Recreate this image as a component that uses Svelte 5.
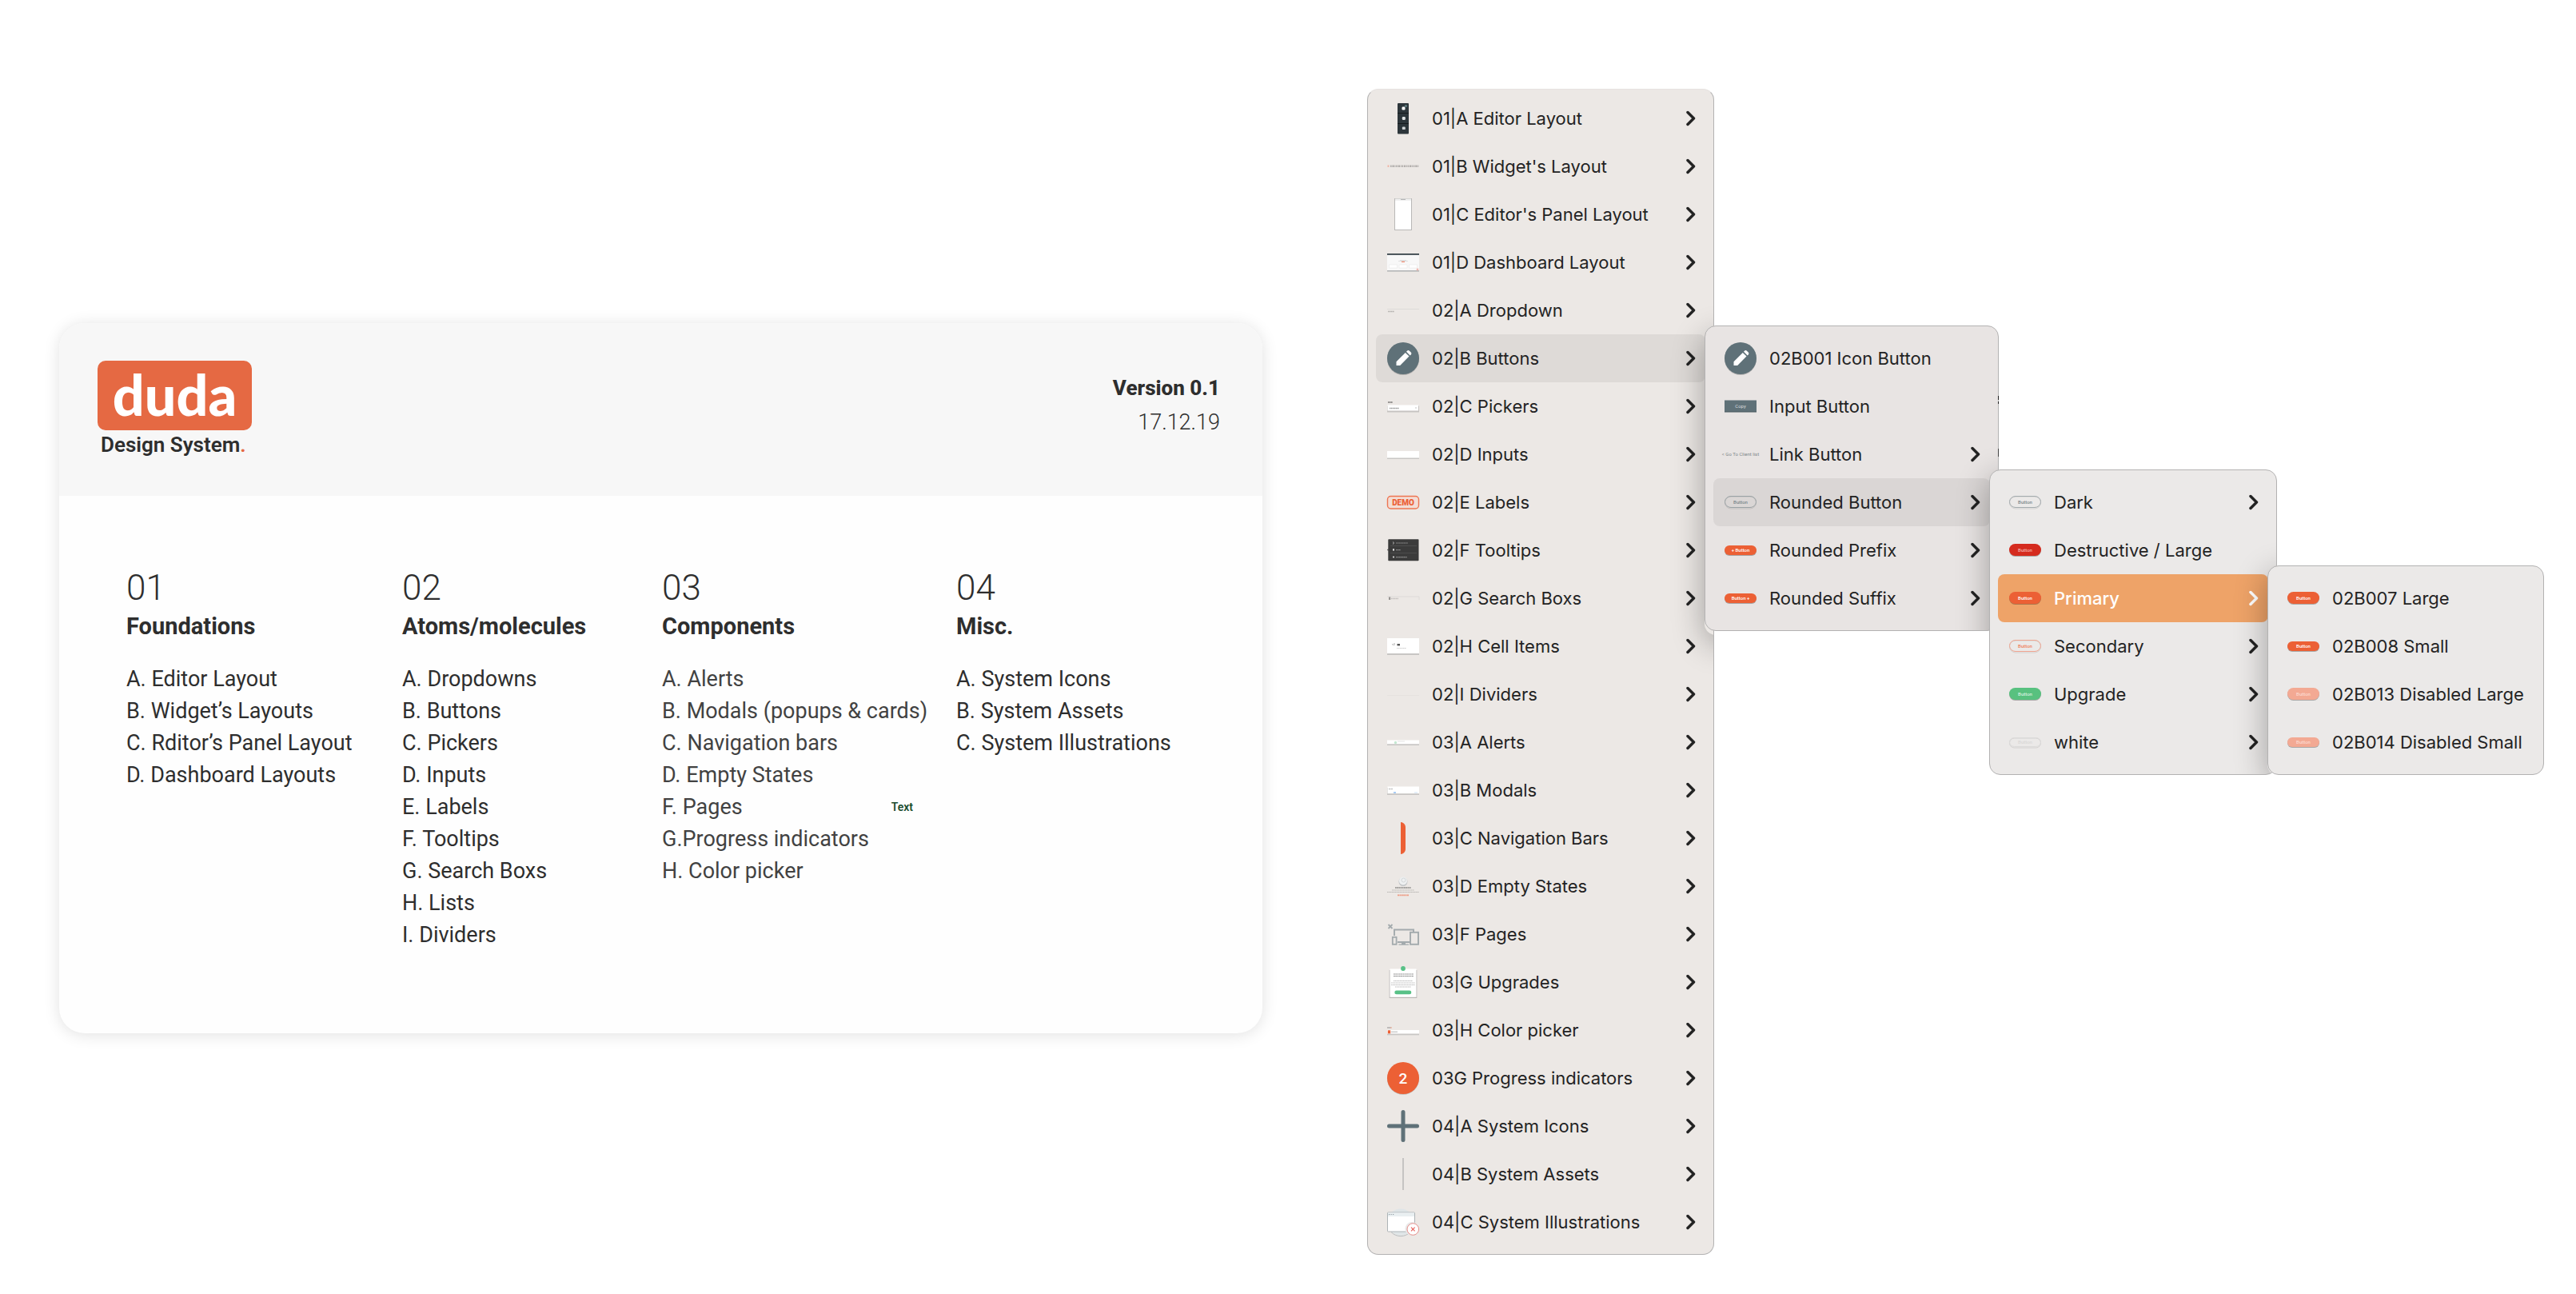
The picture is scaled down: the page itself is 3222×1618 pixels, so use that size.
<script>
  const sections = [
    {
      number: '01',
      title: 'Foundations',
      items: ['A. Editor Layout', 'B. Widget’s Layouts', 'C. Rditor’s Panel Layout', 'D. Dashboard Layouts']
    },
    {
      number: '02',
      title: 'Atoms/molecules',
      items: [
        'A. Dropdowns',
        'B. Buttons',
        'C. Pickers',
        'D. Inputs',
        'E. Labels',
        'F. Tooltips',
        'G. Search Boxs',
        'H. Lists',
        'I. Dividers'
      ]
    },
    {
      number: '03',
      title: 'Components',
      soft: true,
      items: [
        'A. Alerts',
        'B. Modals (popups & cards)',
        'C. Navigation bars',
        'D. Empty States',
        'F. Pages',
        'G.Progress indicators',
        'H. Color picker'
      ],
      tags: { 'F. Pages': 'Text' }
    },
    {
      number: '04',
      title: 'Misc.',
      items: ['A. System Icons', 'B. System Assets', 'C. System Illustrations']
    }
  ];

  const orange = '#ec6035';
  const pill = (fill, text = '#fff', extra = {}) => ({ fill, text, label: 'Button', ...extra });

  const menu = {
    name: 'root',
    open: 5,
    items: [
      { label: '01|A Editor Layout', icon: 'editor', more: true },
      { label: "01|B Widget's Layout", icon: 'widget', more: true },
      { label: "01|C Editor's Panel Layout", icon: 'panel', more: true },
      { label: '01|D Dashboard Layout', icon: 'dashboard', more: true },
      { label: '02|A Dropdown', icon: 'dropdown', more: true },
      {
        label: '02|B Buttons',
        icon: 'pencil',
        more: true,
        submenu: {
          name: 'buttons',
          open: 3,
          items: [
            { label: '02B001 Icon Button', icon: 'pencil' },
            { label: 'Input Button', icon: 'copy' },
            { label: 'Link Button', icon: 'link', more: true },
            {
              label: 'Rounded Button',
              pill: pill('none', '#7b878c', { stroke: '#9aa2a5' }),
              more: true,
              submenu: {
                name: 'rounded',
                open: 2,
                items: [
                  { label: 'Dark', pill: pill('none', '#7b878c', { stroke: '#a3abae' }), more: true },
                  { label: 'Destructive / Large', pill: pill('#d52b1e', '#f3b3ad') },
                  {
                    label: 'Primary',
                    accent: true,
                    pill: pill(orange),
                    more: true,
                    submenu: {
                      name: 'primary',
                      open: -1,
                      items: [
                        { label: '02B007 Large', pill: pill(orange) },
                        { label: '02B008 Small', pill: pill(orange, '#fff', { small: true }) },
                        { label: '02B013 Disabled Large', pill: pill('#f3a993', '#fbd9cf') },
                        { label: '02B014 Disabled Small', pill: pill('#f3a993', '#fbd9cf', { small: true }) }
                      ]
                    }
                  },
                  { label: 'Secondary', pill: pill('none', '#ef7d5a', { stroke: '#f0a590' }), more: true },
                  { label: 'Upgrade', pill: pill('#58c17f', '#d5f0df'), more: true },
                  { label: 'white', pill: pill('none', '#d9d8d7', { stroke: '#dcdbda', small: true }), more: true }
                ]
              }
            },
            { label: 'Rounded Prefix', pill: pill(orange, '#fff', { small: true, label: '+ Button' }), more: true },
            { label: 'Rounded Suffix', pill: pill(orange, '#fff', { small: true, label: 'Button +' }), more: true }
          ]
        }
      },
      { label: '02|C Pickers', icon: 'pickers', more: true },
      { label: '02|D Inputs', icon: 'inputs', more: true },
      { label: '02|E Labels', icon: 'labels', more: true },
      { label: '02|F Tooltips', icon: 'tooltips', more: true },
      { label: '02|G Search Boxs', icon: 'search', more: true },
      { label: '02|H Cell Items', icon: 'cells', more: true },
      { label: '02|I Dividers', icon: 'dividers', more: true },
      { label: '03|A Alerts', icon: 'alerts', more: true },
      { label: '03|B Modals', icon: 'modals', more: true },
      { label: '03|C Navigation Bars', icon: 'navigation', more: true },
      { label: '03|D Empty States', icon: 'empty', more: true },
      { label: '03|F Pages', icon: 'pages', more: true },
      { label: '03|G Upgrades', icon: 'upgrades', more: true },
      { label: '03|H Color picker', icon: 'color', more: true },
      { label: '03G Progress indicators', icon: 'progress', more: true },
      { label: '04|A System Icons', icon: 'plus', more: true },
      { label: '04|B System Assets', icon: 'assets', more: true },
      { label: '04|C System Illustrations', icon: 'illustrations', more: true }
    ]
  };
</script>

{#snippet pillIcon(p)}
  {@const top = p.small ? 14 : 12}
  {@const height = p.small ? 12 : 15}
  <svg class="icon" viewBox="0 0 40 40" aria-hidden="true">
    {#if p.stroke}
      <rect x="0.5" y={top + 1} width="39" height={height} rx={height / 2} fill="none" stroke="#000" stroke-opacity="0.1" />
      <rect x="0.5" y={top + 0.5} width="39" height={height - 1} rx={height / 2} fill="none" stroke={p.stroke} />
    {:else}
      <rect x="0" y={top + 1} width="40" height={height} rx={height / 2} fill="#000" fill-opacity="0.28" />
      <rect x="0" y={top} width="40" {height} rx={height / 2} fill={p.fill} />
    {/if}
    <text class="pill-text" x="20" y="22" fill={p.text}>{p.label}</text>
  </svg>
{/snippet}

{#snippet pictureIcon(name)}
  <svg class="icon" viewBox="0 0 40 40" aria-hidden="true">
    {#if name === 'editor'}
      <rect x="13" y="1" width="14" height="38.5" rx="1" fill="#2d363b" />
      <path d="M13 13.5h14M13 26.5h14" stroke="#161c1f" />
      <rect x="18.5" y="5.5" width="4" height="4" rx="1.2" fill="#fff" />
      <circle cx="23.5" cy="4.5" r="1.6" fill="#5e7d80" />
      <rect x="18.8" y="18" width="4" height="4" rx="1.2" fill="#dfe3e4" />
      <rect x="18.8" y="30.5" width="4" height="3.6" rx="1.2" fill="#cfd4d6" />
    {:else if name === 'widget'}
      <rect x="0.5" y="18.5" width="2" height="2.4" fill="#efb5a6" />
      <path d="M4 19.7h36" stroke="#b3afad" stroke-width="2.6" stroke-dasharray="1.6 0.8 2.4 0.7 1 0.7" />
    {:else if name === 'panel'}
      <rect x="9" y="0" width="22" height="40" fill="#b9b8b7" />
      <rect x="10" y="1" width="20" height="38" fill="#fff" />
      <rect x="10" y="0.5" width="20" height="2.5" fill="#f0f0f0" />
      <path d="M17 1.5h6" stroke="#b5b5b5" />
    {:else if name === 'dashboard'}
      <rect y="9" width="40" height="22" fill="#f8f8f8" />
      <rect y="9" width="40" height="1.8" fill="#38444a" />
      <rect y="30" width="40" height="1.6" fill="#b4b6b7" />
      <path d="M16 17.5h8M14 18.5h12" stroke="#d0d0d0" stroke-width="0.6" />
      <rect x="18" y="18.8" width="4" height="1.2" fill="#ef8a70" />
      <path d="M2.5 23h10v4h-10zM15 23h10v4h-10zM27.5 23h10v4h-10z" fill="#fff" stroke="#e4e4e4" stroke-width="0.5" />
      <circle cx="38" cy="29" r="1.4" fill="#f0b7b0" />
    {:else if name === 'dropdown'}
      <path d="M0 18.5h40" stroke="#dedbd9" />
      <path d="M1 21.5h8" stroke="#b5b2b0" stroke-width="1.6" stroke-dasharray="1.6 0.4" />
    {:else if name === 'pencil'}
      <circle cx="20" cy="21" r="20" fill="#000" fill-opacity="0.18" />
      <circle cx="20" cy="20" r="20" fill="#5f7178" />
      <path d="M11.5 24.2L22.8 12.9l4.7 4.7L16.2 28.9h-4.7z" fill="#fff" />
      <path d="M24 11.7l1-1c.9-.9 2-.9 2.9 0l1.8 1.8c.9.9.9 2 0 2.9l-1 1z" fill="#fff" />
    {:else if name === 'copy'}
      <rect y="13.5" width="40" height="14" fill="#49585f" />
      <rect y="12.5" width="40" height="14" fill="#5f7178" />
      <text class="pill-text plain" x="20" y="21.5" fill="#d5dbdd">Copy</text>
    {:else if name === 'link'}
      <text class="pill-text plain" x="20" y="21.8" fill="#7f878a">&lt; Go To Client list</text>
    {:else if name === 'pickers'}
      <path d="M1 15h6" stroke="#8f8c8a" stroke-width="2" stroke-dasharray="1.5 0.4" />
      <rect y="19.5" width="40" height="8" fill="#c6c3c1" />
      <rect x="0.5" y="18.5" width="38.5" height="7" fill="#fff" />
      <path d="M3 22.5h12" stroke="#999" stroke-width="1.6" stroke-dasharray="1.5 0.5" />
      <circle cx="36" cy="22" r="0.8" fill="#bbb" />
    {:else if name === 'inputs'}
      <rect y="18" width="40" height="8" fill="#c9c7c5" />
      <rect y="16" width="40" height="8.5" fill="#fff" />
    {:else if name === 'labels'}
      <rect x="0.5" y="12.5" width="39" height="15.5" rx="4" fill="#f3ddd5" stroke="#ee7552" stroke-width="1.4" />
      <text class="demo-text" x="20" y="23.8" fill="#ec6035">DEMO</text>
    {:else if name === 'tooltips'}
      <path d="M0 19.5l1.5-1.5v3z" fill="#3b3b3b" />
      <rect x="1.3" y="6.3" width="38.2" height="27" rx="0.8" fill="#3b3b3b" />
      <path d="M4 14.5h33M4 23.5h33" stroke="#505050" stroke-width="0.8" />
      <path d="M7 9.500l1.600 1.500L7 12.500" stroke="#ddd" fill="none" stroke-width="0.800" />
      <rect x="7" y="18.2" width="2" height="2.4" fill="#ddd" />
      <circle cx="8" cy="28.5" r="1.1" fill="#ddd" />
      <path d="M11 11h15M11 19.7h6M11 28.7h14" stroke="#8c8c8c" stroke-width="1.2" stroke-dasharray="1.5 0.4" />
    {:else if name === 'search'}
      <path d="M0 18h40v4" fill="none" stroke="#dddad8" />
      <rect x="2" y="18.5" width="2.2" height="3.5" fill="#979492" />
      <path d="M5 20.5h9" stroke="#c2bfbd" stroke-width="1.5" stroke-dasharray="1.5 0.5" />
    {:else if name === 'cells'}
      <rect y="12" width="40" height="19" fill="#c8c6c4" />
      <rect y="10" width="40" height="19" fill="#fff" />
      <path d="M6.5 17l1 2M9 16v3" stroke="#999" stroke-width="0.8" />
      <rect x="12.5" y="17" width="3.5" height="2.4" fill="#555" />
      <path d="M12 22.5h12" stroke="#cfcfcf" stroke-dasharray="1.5 0.5" />
    {:else if name === 'dividers'}
      <path d="M0 21.5h40" stroke="#e5e2df" />
    {:else if name === 'alerts'}
      <rect y="19" width="40" height="5" fill="#c8c6c4" />
      <rect y="17.5" width="40" height="4.8" fill="#fff" />
      <circle cx="10.5" cy="20.5" r="1.7" fill="#c4e8d1" />
      <path d="M13 19h9" stroke="#e4e4e4" />
    {:else if name === 'modals'}
      <rect y="17" width="40" height="9" fill="#c8c6c4" />
      <rect x="0.5" y="15.5" width="39.5" height="8.7" fill="#fff" />
      <path d="M2 18.5h5" stroke="#bbb" stroke-width="1.5" stroke-dasharray="1 0.4" />
      <rect x="8" y="22" width="3" height="2" fill="#a9cdf5" />
      <path d="M34 23h4" stroke="#cde0f5" />
    {:else if name === 'navigation'}
      <path d="M17 0c4 .5 6 3 6 7v26c0 4-2 6.5-6 7z" fill="#ec6035" />
    {:else if name === 'empty'}
      <circle cx="20" cy="14.5" r="5.5" fill="#c3c6c8" />
      <circle cx="20" cy="13.5" r="5" fill="#eef0f1" />
      <circle cx="20.5" cy="12.5" r="2.5" fill="none" stroke="#c9cdcf" stroke-width="0.7" />
      <path d="M10 22h20" stroke="#8b8987" stroke-width="1.6" stroke-dasharray="1.8 0.4" />
      <path d="M6 25h28M0 27.5h40" stroke="#bab7b5" stroke-width="1.2" stroke-dasharray="1.5 0.5" />
      <path d="M13 31.3h14" stroke="#ee9c85" stroke-width="1.8" stroke-dasharray="2 0.4" />
    {:else if name === 'pages'}
      <path d="M1.5 8l5 5M6.5 8l-5 5" stroke="#a3aaad" stroke-width="1.8" />
      <path d="M9 22v-7.5h24V17M13 30h15" stroke="#a3aaad" stroke-width="1.9" fill="none" />
      <rect x="6.8" y="23.8" width="4.8" height="9" fill="none" stroke="#a3aaad" stroke-width="1.8" />
      <rect x="29" y="17.8" width="10" height="15" fill="none" stroke="#a3aaad" stroke-width="1.9" />
      <path d="M18 31h5v2h-5zM14.5 32.5h12.5v1.2H14.5z" fill="#a3aaad" />
    {:else if name === 'upgrades'}
      <rect x="2.7" y="5" width="34.6" height="35" fill="#b9b7b5" />
      <rect x="3.5" y="3.5" width="33" height="35.3" fill="#fff" />
      <circle cx="20" cy="3" r="2.9" fill="#58c187" />
      <path d="M8 10h25M8 12.5h25" stroke="#888" stroke-width="1.1" stroke-dasharray="1.8 0.5" />
      <path d="M8 18.5h24M5 21h30M5 23.5h30M10 26h20" stroke="#b5b5b5" stroke-width="0.9" stroke-dasharray="1.5 0.5" />
      <rect x="9.3" y="30.5" width="21" height="4.8" rx="2.4" fill="#58c187" />
    {:else if name === 'color'}
      <path d="M0 17h4.5" stroke="#b0adab" stroke-width="1.5" />
      <path d="M4.5 17h1" stroke="#ec6035" />
      <rect y="21.5" width="40" height="4.8" fill="#c8c6c4" />
      <rect y="20" width="40" height="4.5" fill="#fff" />
      <rect x="0.8" y="20.3" width="3.4" height="4" fill="#ec6035" />
      <path d="M5 22.3h8" stroke="#ccc" stroke-width="1.5" />
    {:else if name === 'progress'}
      <circle cx="20" cy="20.8" r="20" fill="#000" fill-opacity="0.2" />
      <circle cx="20" cy="20" r="20" fill="#ec6035" />
      <text class="badge-text" x="20" y="27" fill="#fff">2</text>
    {:else if name === 'plus'}
      <path d="M20 2.5v35M2.5 20h35" stroke="#5f7178" stroke-width="5" stroke-linecap="round" />
    {:else if name === 'assets'}
      <path d="M20 0v40" stroke="#c6c4c3" stroke-width="2" />
    {:else if name === 'illustrations'}
      <circle cx="17" cy="20" r="16.5" fill="#dfe5e7" />
      <path d="M5 32.5a16.5 16.5 0 0 0 24 0" fill="none" stroke="#b6bcbf" />
      <rect x="0.5" y="8" width="34" height="24" rx="0.8" fill="#fff" stroke="#adb3b6" />
      <rect x="1" y="8.5" width="33" height="4.5" fill="#e9eff1" />
      <path d="M2 10.5h1.2M4.5 10.5h1.2M7 10.5h1.2" stroke="#8c979c" />
      <circle cx="31" cy="28.5" r="8.5" fill="#e8e8e8" />
      <circle cx="32.3" cy="29" r="7.3" fill="#fff" stroke="#e58f8b" />
      <path d="M30 26.7l4.6 4.6M34.6 26.7L30 31.3" stroke="#e8635d" stroke-width="1.2" />
    {/if}
  </svg>
{/snippet}

{#snippet menuPanel(panel)}
  <div class="menu {panel.name}">
    <ul class="rows" aria-label={panel.name}>
      {#each panel.items as item, i}
        <li class="row">
          <button
            type="button"
            class="item"
            class:open={i === panel.open}
            class:accent={item.accent}
            aria-haspopup={item.more ? 'menu' : undefined}
            aria-expanded={item.more ? i === panel.open : undefined}
          >
            {#if item.pill}
              {@render pillIcon(item.pill)}
            {:else}
              {@render pictureIcon(item.icon)}
            {/if}
            <span class="label">{item.label}</span>
            {#if item.more}
              <svg class="chevron" viewBox="0 0 12 20" aria-hidden="true">
                <path d="M2 2.5L9.5 10 2 17.5" />
              </svg>
            {/if}
          </button>
          {#if item.submenu}
            <div class="flyout">{@render menuPanel(item.submenu)}</div>
          {/if}
        </li>
      {/each}
    </ul>
    {#if panel.open >= 0}
      <div class="shade" aria-hidden="true" style:--row={panel.open} style:--count={panel.items[panel.open].submenu.items.length}>
        <div class="cast"></div>
      </div>
    {/if}
  </div>
{/snippet}

<main class="page">
  <article class="card">
    <header class="head">
      <div class="brand">
        <div class="logo">duda</div>
        <p class="tagline">Design System<span class="dot">.</span></p>
      </div>
      <div class="meta">
        <p class="version">Version 0.1</p>
        <p class="date">17.12.19</p>
      </div>
    </header>
    <div class="columns">
      {#each sections as section}
        <section class:soft={section.soft}>
          <p class="number">{section.number}</p>
          <h2>{section.title}</h2>
          <ul class="list">
            {#each section.items as item}
              <li>
                {item}
                {#if section.tags?.[item]}<span class="tag">{section.tags[item]}</span>{/if}
              </li>
            {/each}
          </ul>
        </section>
      {/each}
    </div>
  </article>

  <nav class="menus" aria-label="Symbols">
    {@render menuPanel(menu)}
  </nav>
</main>

<style>
  :global(body) {
    background: #fff;
  }

  .page {
    display: flex;
    box-sizing: border-box;
    min-height: 100vh;
    padding: 111px 40px 49px 74px;
    gap: 131px;
    color: #2e2e2e;
    font-family: Roboto, 'Liberation Sans', sans-serif;
  }

  p,
  h2,
  ul {
    margin: 0;
    padding: 0;
  }

  ul {
    list-style: none;
  }

  .card {
    flex: 1;
    align-self: center;
    margin-top: 15px;
    border-radius: 32px;
    background: #fefefe;
    box-shadow: 0 2px 20px rgba(0, 0, 0, 0.12);
    overflow: hidden;
  }

  .head {
    display: flex;
    justify-content: space-between;
    box-sizing: border-box;
    height: 216px;
    padding: 47px 53px 0 48px;
    background: #f7f7f7;
  }

  .brand {
    width: 193px;
  }

  .logo {
    height: 87px;
    border-radius: 10px;
    background: #e56943;
    color: #fff;
    font: 900 70px/84px Lato, sans-serif;
    text-align: center;
  }

  .tagline {
    padding-left: 4px;
    font-size: 26px;
    font-weight: 600;
    line-height: 37px;
    white-space: nowrap;
  }

  .dot {
    color: #e56943;
  }

  .meta {
    padding-top: 13px;
    text-align: right;
    font-size: 27px;
    line-height: 43px;
  }

  .version {
    font-size: 26px;
    font-weight: 800;
  }

  .date {
    font-weight: 300;
  }

  .columns {
    display: grid;
    grid-template-columns: 345fr 325fr 368fr 383fr;
    padding: 87px 0 103px 84px;
  }

  .number {
    font-size: 44px;
    font-weight: 300;
    line-height: 56px;
  }

  h2 {
    margin-bottom: 26px;
    font-size: 29px;
    font-weight: 700;
    line-height: 40px;
  }

  .list {
    font-size: 27px;
    line-height: 40px;
    white-space: nowrap;
  }

  .soft .list {
    color: #424242;
  }

  .soft li {
    display: flex;
    justify-content: space-between;
    width: 314px;
  }

  .tag {
    color: #1c4d2f;
    font-size: 14px;
    font-weight: 600;
  }

  .menus {
    flex: none;
    width: 1472px;
    font-family: Inter, 'Liberation Sans', sans-serif;
  }

  .menu {
    position: relative;
    box-sizing: border-box;
    padding: 10px;
    border: 1px solid #b3b2b2;
    border-radius: 14px;
  }

  .root {
    width: 434px;
    padding-top: 6px;
    border-top-color: #e6e2e0;
    background: #ece8e5;
  }

  .buttons {
    width: 368px;
    background: #e8e4e3;
  }

  /* Slivers of covered text showing past the panel's right edge */
  .buttons::after {
    content: '';
    position: absolute;
    top: 87px;
    right: -1px;
    width: 1px;
    height: 76px;
    background: linear-gradient(#222 5px, #bbb 5px 7px, #222 7px 10px, transparent 10px 66px, #444 66px);
  }

  .rounded {
    width: 360px;
    background: #ebe9e8;
  }

  .primary {
    width: 346px;
    background: #ebe9e8;
  }

  .row {
    position: relative;
  }

  .item {
    display: flex;
    align-items: center;
    gap: 16px;
    box-sizing: border-box;
    width: 100%;
    height: 60px;
    padding: 0 12px 0 14px;
    border: 0;
    border-radius: 8px;
    background: none;
    color: #232323;
    font: 400 22px/28px Inter, 'Liberation Sans', sans-serif;
    text-align: left;
    white-space: nowrap;
  }

  .item.open {
    background: rgba(0, 0, 0, 0.06);
  }

  .item.open.accent {
    background: #eea368;
    color: #fff;
    font-weight: 500;
  }

  .label {
    flex: 1;
  }

  .icon {
    flex: none;
    width: 40px;
    height: 40px;
    overflow: visible;
  }

  .pill-text {
    font: 500 6px Roboto, sans-serif;
    text-anchor: middle;
  }

  .pill-text.plain {
    font-weight: 400;
  }

  .demo-text {
    font: 900 10px Roboto, sans-serif;
    text-anchor: middle;
  }

  .badge-text {
    font: 500 19px Roboto, sans-serif;
    text-anchor: middle;
  }

  .chevron {
    flex: none;
    width: 12px;
    height: 20px;
    fill: none;
    stroke: currentColor;
    stroke-width: 3.5;
    stroke-linecap: round;
    stroke-linejoin: round;
  }

  .flyout {
    position: absolute;
    z-index: 2;
    top: -11px;
    left: calc(100% - 1px);
  }

  .shade {
    position: absolute;
    inset: 0;
    z-index: 1;
    border-radius: 13px;
    overflow: hidden;
    pointer-events: none;
  }

  .cast {
    position: absolute;
    top: calc(var(--row) * 60px);
    left: calc(100% - 11px);
    width: 345px;
    height: calc(var(--count) * 60px + 22px);
    border-radius: 14px;
    box-shadow: 0 10px 40px rgba(0, 0, 0, 0.32);
  }
</style>
